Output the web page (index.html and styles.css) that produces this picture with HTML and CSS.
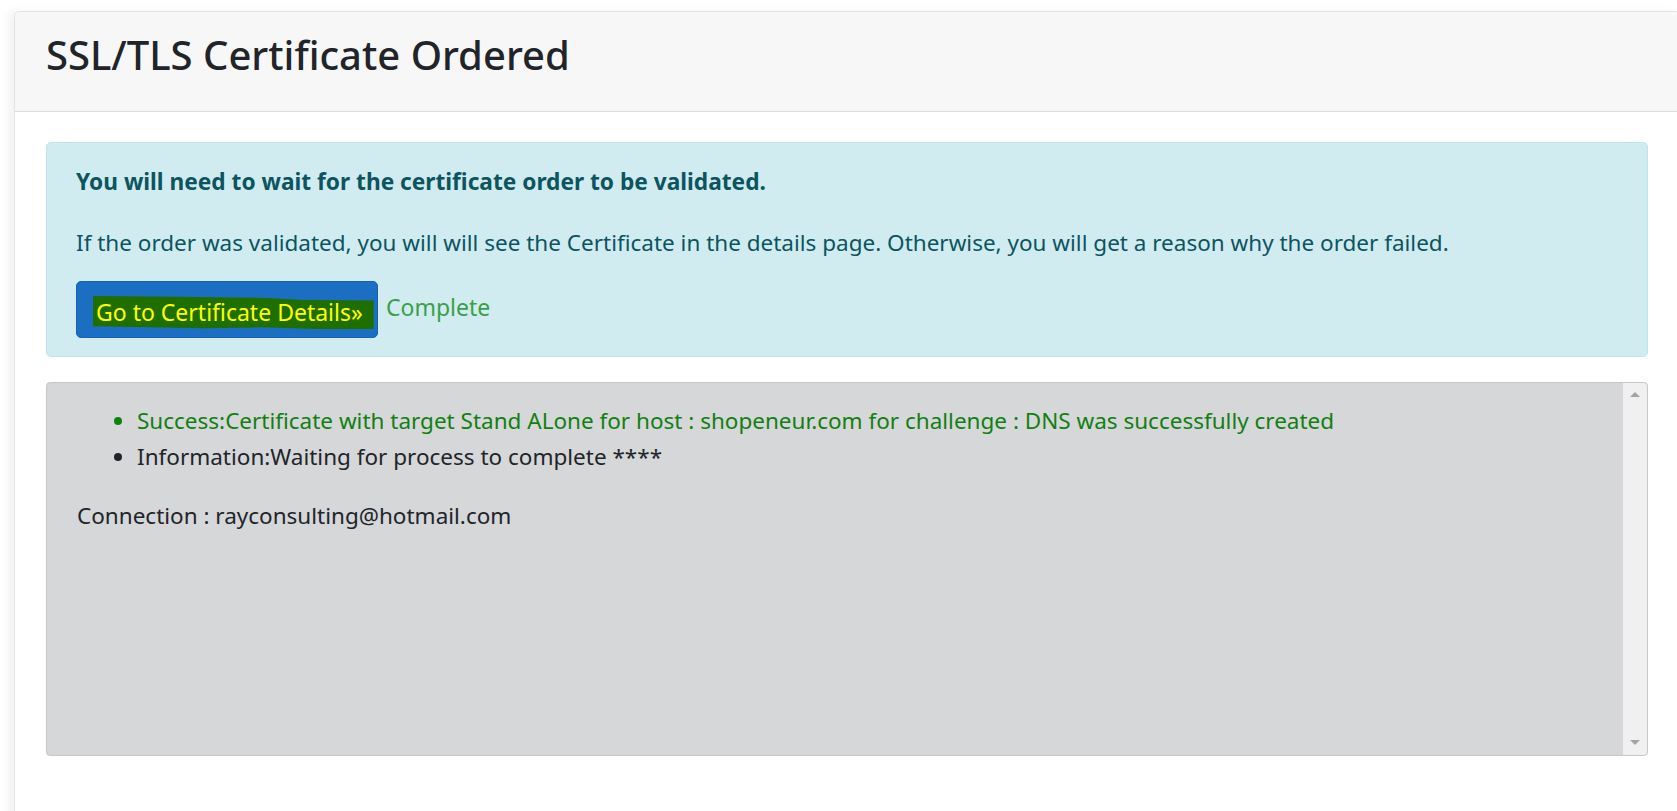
FILE: index.html
```html
<!DOCTYPE html>
<html lang="en">
<head>
<meta charset="utf-8">
<title>SSL/TLS Certificate Ordered</title>
<link rel="stylesheet" href="styles.css">
</head>
<body>
<div class="card">
  <div class="card-header">
    <h1 class="title">SSL/TLS Certificate Ordered</h1>
  </div>
  <div class="card-body">
    <div class="alert">
      <p class="alert-strong">You will need to wait for the certificate order to be validated.</p>
      <p class="alert-text">If the order was validated, you will will see the Certificate in the details page. Otherwise, you will get a reason why the order failed.</p>
      <div class="actions">
        <a class="btn"><span class="marker">Go to Certificate Details»</span></a>
        <span class="status">Complete</span>
      </div>
    </div>
    <div class="log">
      <div class="log-content">
        <ul class="log-list">
          <li class="ok">Success:Certificate with target Stand ALone for host : shopeneur.com for challenge : DNS was successfully created</li>
          <li>Information:Waiting for process to complete ****</li>
        </ul>
        <p class="conn">Connection : rayconsulting@hotmail.com</p>
      </div>
      <div class="scrollbar">
        <span class="arrow up"></span>
        <span class="arrow down"></span>
      </div>
    </div>
  </div>
</div>
</body>
</html>
```
FILE: styles.css
```css
html, body {
  margin: 0;
  padding: 0;
  background: #ffffff;
  overflow: hidden;
  height: 100%;
}
body {
  font-family: "Noto Sans", "Open Sans", sans-serif;
  color: #212529;
}
.card {
  margin: 11px 0 0 14px;
  width: 1666px;
  height: 820px;
  box-sizing: border-box;
  border: 1px solid #e2e2e2;
  border-radius: 5px;
  background: #fff;
  box-shadow: -6px 0 10px rgba(0,0,0,0.05);
}
.card-header {
  height: 100px;
  box-sizing: border-box;
  background: #f7f7f7;
  border-bottom: 1px solid #dcdcdc;
  border-radius: 5px 5px 0 0;
  padding: 16px 0 0 31px;
}
.title {
  margin: 0;
  font-size: 40px;
  line-height: 54px;
  font-weight: 500;
  color: #212529;
}
.card-body {
  padding: 30px 31px;
}
.alert {
  background: #d1ecf1;
  border: 1px solid #bee5eb;
  border-radius: 5px;
  color: #0c5460;
  padding: 18px 30px 18px 29px;
  height: 215px;
  box-sizing: border-box;
  font-size: 22.5px;
}
.alert p { margin: 0; }
.alert-strong {
  font-weight: 700;
  font-size: 22.7px;
  line-height: 30px;
  padding-top: 6px;
}
.alert-text {
  margin-top: 31px !important;
  line-height: 30px;
}
.actions {
  margin-top: 23px;
  display: flex;
  align-items: center;
  gap: 8px;
}
.btn {
  width: 302px;
  height: 57px;
  box-sizing: border-box;
  background: #1b6ec2;
  border: 1px solid #1861ac;
  border-radius: 5px;
  display: flex;
  align-items: center;
  padding-left: 16px;
  font-size: 23px;
}
.marker {
  display: inline-block;
  background: #1f6e00;
  color: #ffff00;
  line-height: 30px;
  padding: 1px 11px 2px 3px;
  margin-top: 6px;
  clip-path: polygon(0 0, 30% 2%, 62% 6%, 75% 12%, 100% 14%, 100% 100%, 80% 100%, 60% 95%, 40% 98%, 0 92%);
}
.status {
  color: #39a048;
  font-size: 23px;
  margin-bottom: 5px;
}
.log {
  margin-top: 25px;
  height: 374px;
  box-sizing: border-box;
  background: #d6d7d9;
  border: 1px solid #c6c7c9;
  border-radius: 4px;
  display: flex;
}
.log-content {
  flex: 1;
  padding: 20px 30px;
  font-size: 22.5px;
}
.log-list {
  margin: 0;
  padding-left: 60px;
  line-height: 36px;
}
.log-list li.ok { color: #118011; }
.conn {
  margin: 23px 0 0;
  line-height: 36px;
}
.scrollbar {
  width: 24px;
  background: #f0f0f0;
  display: flex;
  flex-direction: column;
  justify-content: space-between;
  align-items: center;
  padding: 9px 0 10px;
  border-radius: 0 4px 4px 0;
}
.arrow {
  width: 0;
  height: 0;
  border-left: 5px solid transparent;
  border-right: 5px solid transparent;
}
.arrow.up { border-bottom: 5px solid #a3a3a3; }
.arrow.down { border-top: 5px solid #a3a3a3; }
```
